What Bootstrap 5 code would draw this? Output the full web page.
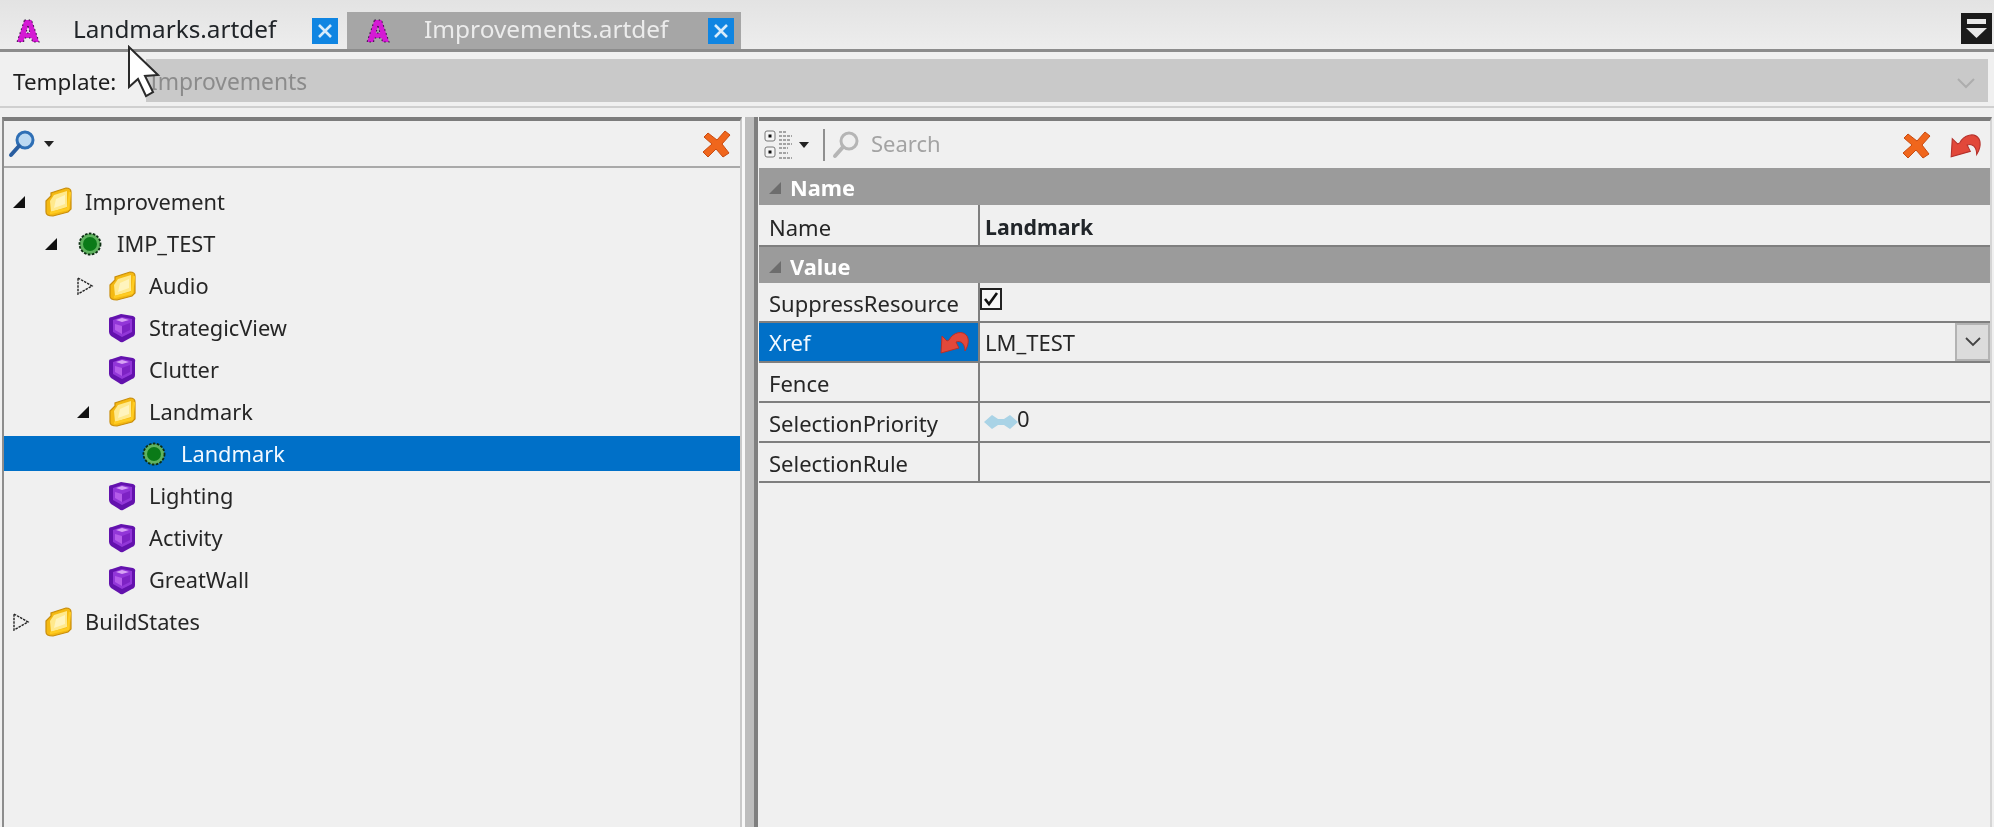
<!DOCTYPE html>
<html lang="en">
<head>
<meta charset="utf-8">
<title>Landmarks.artdef</title>
<link href="https://cdn.jsdelivr.net/npm/bootstrap@5.3.0/dist/css/bootstrap.min.css" rel="stylesheet">
<style>
html,body{margin:0;height:827px;overflow:hidden;background:#f0f0f0}
body{font-family:"Noto Sans",sans-serif;font-size:22px;color:#222}
.app-root{width:1994px;height:827px;background:#f0f0f0;filter:blur(.5px)}
.tabstrip{height:52px;background:linear-gradient(#e3e3e3,#ededed);border-bottom:3px solid #8c8c8c}
.doc-tab{margin-top:12px;height:37px;width:347px;padding-left:15px}
.doc-tab-off{margin-top:12px;height:37px;width:394px;padding-left:18px;background:#a6a6a6;color:#ececec}
.tab-icon{width:26px;height:26px;flex:none}
.tab-label{font-size:24.3px;margin-left:32px;line-height:1;flex:1 1 auto;padding-bottom:3px}
.doc-tab-off .tab-label{margin-left:33px;font-size:24.4px;padding-bottom:2px}
.tab-x{width:26px;height:26px;flex:none;margin-right:9px}
.doc-tab-off .tab-x{margin-right:7px}
.menu-btn{width:31px;height:31px;margin:13px 2px 0 0;background:#1b1b1b;display:block}
.template-row{height:56px;padding:7px 6px 4px 13px;border-bottom:2px solid #cfcfcf}
.template-label{width:133px;font-size:22.4px;color:#1e1e1e;line-height:1;padding-top:4px}
.template-combo{background:#c9c9c9;color:#8b8b8b;padding:4px 12px 0 4px;font-size:22.8px;line-height:1}
.panes{padding-top:9px;height:719px}
.tree-pane{width:740px;margin-left:2px;border-left:2px solid #8d8d8d;border-top:4px solid #7c7c7c;border-right:2px solid #c9c9c9;background:#f0f0f0}
.tool-row{height:47px;border-bottom:2px solid #a9a9a9}
.pane-split{width:17px;border-left:3px solid #f8f8f8;background:linear-gradient(90deg,#bdbdbd 0,#bdbdbd 9px,#7f7f7f 9px,#7f7f7f 13px,#f0f0f0 13px)}
.tree-list{padding-top:16px}
.tree-item{height:35px;margin-bottom:7px;font-size:21.8px;line-height:1;color:#262626}
.tree-item.picked{background:#0070c8;color:#f2f9ff}
.lvl-0{padding-left:8px}.lvl-1{padding-left:40px}.lvl-2{padding-left:72px}.lvl-3{padding-left:104px}
.twist{width:32px;flex:none;display:block}
.node-icon{width:28px;height:30px;flex:none;margin-right:13px}
.prop-pane{width:1233px;border-top:4px solid #7c7c7c;border-right:2px solid #d5d5d5}
.prop-tools{height:47px}
.tool-sep{margin-left:13px}
.tool-glass{margin-left:6px}
.search-hint{font-size:22px;color:#a3a3a3;margin-left:11px;line-height:1;padding-bottom:3px}
.group-band{height:37px;background:#9b9b9b;color:#fff;font-weight:700;font-size:21.8px;padding:3px 0 0 9px;line-height:1}
.band-two{height:36px}
.prop-row{height:42px;border-bottom:2px solid #7f7f7f;line-height:1;font-size:22px}
.prop-row.short{height:40px}
.prop-key{width:221px;flex:none;border-right:2px solid #7f7f7f;padding:3px 0 0 10px;color:#262626;height:100%}
.prop-row.short .prop-key{padding-top:1px}
.prop-row.short .prop-key.picked{padding:0 8px 0 10px}
.prop-key.picked{background:#0070c8;color:#f2f9ff}
.prop-val{padding-left:5px;height:100%;color:#262626}
.val-strong{font-size:21.3px;padding-top:3px}
.drop-btn{width:35px;height:100%;background:#dcdcdc;border:2px solid #b3b3b3;flex:none}
.check-box{width:22px;height:22px;background:#f7f7f7;border:2px solid #222;margin-top:-6px;display:block}
.spin-digit{margin:-8px 0 0 -1px}
.mouse-arrow{left:126px;top:45px;width:36px;height:54px;z-index:5}
</style>
</head>
<body>
<svg width="0" height="0" class="d-block position-absolute">
  <defs>
    <symbol id="ic-a" viewBox="0 0 26 26"><path fill-rule="evenodd" d="M9.5 2 H16.5 L24 24 H17.5 L16.5 20 H9.5 L8.5 24 H2 Z M13 8 L11 15 H15 Z" fill="#d41ad4" stroke="#2c0b3a" stroke-width="1.1" stroke-dasharray="1.4 2.8"/></symbol>
    <symbol id="ic-x" viewBox="0 0 26 26"><rect width="26" height="26" fill="#0f85e2"/><path d="M7 7 L19 19 M19 7 L7 19" stroke="#d7ecfb" stroke-width="2.6"/></symbol>
    <symbol id="ic-folder" viewBox="0 0 28 30"><path d="M2 14 L7 9 V6 L22 1 Q27 1 27 5 V22 L24 25 L9 29 Q2 29 2 25 Z" fill="#f4b912" stroke="#c98d0a" stroke-width="1.2"/><path d="M6 14 L10 8 L23 4 V20 L7 25 Z" fill="#ffe98c"/><path d="M12 12 L21 8 V17 L10 21 Z" fill="#fff4be"/><path d="M6 26 L24 22 L26 5" fill="none" stroke="#ffcc22" stroke-width="2.4"/></symbol>
    <symbol id="ic-cube" viewBox="0 0 28 30"><path d="M1 6 Q1 4 4 4 L13 1 L25 3 Q28 4 27 7 V20 Q27 23 24 24 L15 29 Q13 30 11 28 L3 23 Q1 21 1 19 Z" fill="#6312ad"/><path d="M5 7 L14 4 L24 6 V19 L14 24 L5 19 Z" fill="#9236d8"/><path d="M8 7 L14 5 L21 7 L14 9 Z" fill="#d7a2f5"/><path d="M7 11 L14 13 V21 L7 17 Z" fill="#b45cea"/><path d="M14 13 L22 10 V17 L14 21 Z" fill="#7d22c4"/></symbol>
    <symbol id="ic-dot" viewBox="0 0 28 30"><circle cx="14" cy="15" r="10.5" fill="#5fb35f" stroke="#0c2e12" stroke-width="1.8" stroke-dasharray="2.6 1.4"/><circle cx="14" cy="15" r="7" fill="#0a7a18"/></symbol>
    <symbol id="ic-del" viewBox="0 0 30 30"><path d="M6 4 L15 11 L23 2 L28 6 L20 15 L27 24 L21 28 L14 20 L6 28 L1 23 L10 15 L2 8 Z" fill="#f0661c" stroke="#c84a10" stroke-width="1"/></symbol>
    <symbol id="ic-undo" viewBox="0 0 32 26"><path d="M11 11 C15 3 25 1 29 7 C32 12 29 19 27 22 C27 15 23 11 18 13 L21 19 L3 24 L4 7 L9 12 Z" fill="#e2483a" stroke="#b5302a" stroke-width="1"/></symbol>
    <symbol id="ic-open" viewBox="0 0 14 14"><path d="M13 1 V13 H1 Z" fill="#111"/></symbol>
    <symbol id="ic-shut" viewBox="0 0 18 18"><path d="M2 1 L16 9 L2 17 Z" fill="none" stroke="#222" stroke-width="1.4" stroke-dasharray="2.5 1"/></symbol>
    <symbol id="ic-glass" viewBox="0 0 28 30"><circle cx="17" cy="11" r="8" fill="#bcd9f2" stroke="#2f6fb5" stroke-width="3"/><path d="M11 17 L3 26" stroke="#2a5ea0" stroke-width="4" stroke-linecap="round"/></symbol>
    <symbol id="ic-glass-off" viewBox="0 0 28 30"><circle cx="17" cy="11" r="8" fill="#efefef" stroke="#b5b5b5" stroke-width="3"/><path d="M11 17 L3 26" stroke="#b5b5b5" stroke-width="4" stroke-linecap="round"/></symbol>
    <symbol id="ic-band" viewBox="0 0 14 14"><path d="M13 1 V13 H1 Z" fill="#6d6d6d"/></symbol>
  </defs>
</svg>

<div class="app-root position-relative d-flex flex-column">
  <div class="tabstrip d-flex justify-content-between">
    <div class="d-flex">
      <div class="doc-tab d-flex align-items-center">
        <svg class="tab-icon"><use href="#ic-a"/></svg>
        <span class="tab-label text-dark">Landmarks.artdef</span>
        <svg class="tab-x"><use href="#ic-x"/></svg>
      </div>
      <div class="doc-tab-off d-flex align-items-center">
        <svg class="tab-icon"><use href="#ic-a"/></svg>
        <span class="tab-label">Improvements.artdef</span>
        <svg class="tab-x"><use href="#ic-x"/></svg>
      </div>
    </div>
    <svg class="menu-btn" viewBox="0 0 31 31"><rect x="6" y="6" width="19" height="5" fill="#e8e8e8"/><path d="M5 15 H26 L15.5 25 Z" fill="#e8e8e8"/></svg>
  </div>

  <div class="template-row d-flex align-items-stretch">
    <div class="template-label d-flex align-items-center">Template:</div>
    <div class="template-combo flex-grow-1 d-flex align-items-center justify-content-between">
      <span>Improvements</span>
      <svg width="20" height="12" viewBox="0 0 20 12"><path d="M2 2 L10 10 L18 2" fill="none" stroke="#adadad" stroke-width="2"/></svg>
    </div>
  </div>

  <div class="panes d-flex flex-grow-1">
    <div class="tree-pane d-flex flex-column">
      <div class="tool-row d-flex align-items-center justify-content-between">
        <div class="d-flex align-items-center ms-1">
          <svg width="28" height="30"><use href="#ic-glass"/></svg>
          <svg class="ms-2" width="10" height="6" viewBox="0 0 10 6"><path d="M0 0 H10 L5 6 Z" fill="#222"/></svg>
        </div>
        <svg class="me-2" width="30" height="30"><use href="#ic-del"/></svg>
      </div>
      <div class="tree-list">
        <div class="tree-item lvl-0 d-flex align-items-center"><svg class="twist" height="14"><use href="#ic-open" width="14" height="14"/></svg><svg class="node-icon"><use href="#ic-folder"/></svg>Improvement</div>
        <div class="tree-item lvl-1 d-flex align-items-center"><svg class="twist" height="14"><use href="#ic-open" width="14" height="14"/></svg><svg class="node-icon"><use href="#ic-dot"/></svg>IMP_TEST</div>
        <div class="tree-item lvl-2 d-flex align-items-center"><svg class="twist" height="18"><use href="#ic-shut" width="18" height="18"/></svg><svg class="node-icon"><use href="#ic-folder"/></svg>Audio</div>
        <div class="tree-item lvl-2 d-flex align-items-center"><span class="twist"></span><svg class="node-icon"><use href="#ic-cube"/></svg>StrategicView</div>
        <div class="tree-item lvl-2 d-flex align-items-center"><span class="twist"></span><svg class="node-icon"><use href="#ic-cube"/></svg>Clutter</div>
        <div class="tree-item lvl-2 d-flex align-items-center"><svg class="twist" height="14"><use href="#ic-open" width="14" height="14"/></svg><svg class="node-icon"><use href="#ic-folder"/></svg>Landmark</div>
        <div class="tree-item picked lvl-3 d-flex align-items-center"><span class="twist"></span><svg class="node-icon"><use href="#ic-dot"/></svg>Landmark</div>
        <div class="tree-item lvl-2 d-flex align-items-center"><span class="twist"></span><svg class="node-icon"><use href="#ic-cube"/></svg>Lighting</div>
        <div class="tree-item lvl-2 d-flex align-items-center"><span class="twist"></span><svg class="node-icon"><use href="#ic-cube"/></svg>Activity</div>
        <div class="tree-item lvl-2 d-flex align-items-center"><span class="twist"></span><svg class="node-icon"><use href="#ic-cube"/></svg>GreatWall</div>
        <div class="tree-item lvl-0 d-flex align-items-center"><svg class="twist" height="18"><use href="#ic-shut" width="18" height="18"/></svg><svg class="node-icon"><use href="#ic-folder"/></svg>BuildStates</div>
      </div>
    </div>

    <div class="pane-split"></div>

    <div class="prop-pane d-flex flex-column">
      <div class="prop-tools d-flex align-items-center">
        <svg class="ms-1" width="32" height="32" viewBox="0 0 30 32">
          <rect x="1" y="2" width="10" height="10" rx="2" fill="#f4f4f4" stroke="#777"/><rect x="4.5" y="5.5" width="3" height="3" fill="#111"/>
          <rect x="1" y="18" width="10" height="10" rx="2" fill="#f4f4f4" stroke="#777"/><rect x="4.5" y="21.5" width="3" height="3" fill="#111"/>
          <path d="M15 3 H23 M15 7 H28 M15 11 H26 M15 15 H28 M15 19 H24 M15 24 H24 M15 29 H28" stroke="#8a8a8a" stroke-width="1.6" stroke-dasharray="3 1"/>
        </svg>
        <svg class="ms-1" width="10" height="6" viewBox="0 0 10 6"><path d="M0 0 H10 L5 6 Z" fill="#222"/></svg>
        <svg class="tool-sep" width="4" height="32" viewBox="0 0 4 32"><rect x="1" width="2" height="32" fill="#8f8f8f"/></svg>
        <svg class="tool-glass" width="28" height="30"><use href="#ic-glass-off"/></svg>
        <span class="search-hint">Search</span>
        <svg class="ms-auto" width="30" height="30"><use href="#ic-del"/></svg>
        <svg class="ms-3 me-2" width="34" height="28"><use href="#ic-undo"/></svg>
      </div>

      <div class="group-band d-flex align-items-center"><svg width="14" height="14" class="me-2"><use href="#ic-band"/></svg>Name</div>
      <div class="prop-row d-flex align-items-center">
        <div class="prop-key d-flex align-items-center">Name</div>
        <div class="prop-val val-strong d-flex align-items-center flex-grow-1 fw-bold text-dark">Landmark</div>
      </div>
      <div class="group-band band-two d-flex align-items-center"><svg width="14" height="14" class="me-2"><use href="#ic-band"/></svg>Value</div>
      <div class="prop-row short d-flex align-items-center">
        <div class="prop-key d-flex align-items-center">SuppressResource</div>
        <div class="prop-val d-flex align-items-center flex-grow-1 ps-0"><svg class="check-box" viewBox="0 0 18 18"><path d="M3 9 L7 14 L15 3" fill="none" stroke="#111" stroke-width="2.6"/></svg></div>
      </div>
      <div class="prop-row short d-flex align-items-center">
        <div class="prop-key picked d-flex align-items-center justify-content-between">Xref<svg width="32" height="26"><use href="#ic-undo"/></svg></div>
        <div class="prop-val d-flex align-items-center flex-grow-1">LM_TEST</div>
        <div class="drop-btn d-flex align-items-center justify-content-center"><svg width="16" height="10" viewBox="0 0 16 10"><path d="M1 1 L8 8 L15 1" fill="none" stroke="#444" stroke-width="1.8"/></svg></div>
      </div>
      <div class="prop-row short d-flex align-items-center">
        <div class="prop-key d-flex align-items-center">Fence</div>
        <div class="prop-val flex-grow-1"></div>
      </div>
      <div class="prop-row short d-flex align-items-center">
        <div class="prop-key d-flex align-items-center">SelectionPriority</div>
        <div class="prop-val d-flex align-items-center flex-grow-1 ps-1"><svg width="34" height="16" viewBox="0 0 34 16"><path d="M0 8 L8 1 L14 5 H20 L26 1 L34 8 L26 15 L20 11 H14 L8 15 Z" fill="#a9d3e6"/></svg><span class="spin-digit">0</span></div>
      </div>
      <div class="prop-row short d-flex align-items-center">
        <div class="prop-key d-flex align-items-center">SelectionRule</div>
        <div class="prop-val flex-grow-1"></div>
      </div>
    </div>
  </div>

  <svg class="mouse-arrow position-absolute" viewBox="0 0 36 54"><path d="M3 2 V42 L12 34 L20 51 L27 47 L19 31 L32 30 Z" fill="#fff" stroke="#2a2a2a" stroke-width="2"/></svg>
</div>
<script src="https://cdn.jsdelivr.net/npm/bootstrap@5.3.0/dist/js/bootstrap.bundle.min.js"></script>
</body>
</html>
